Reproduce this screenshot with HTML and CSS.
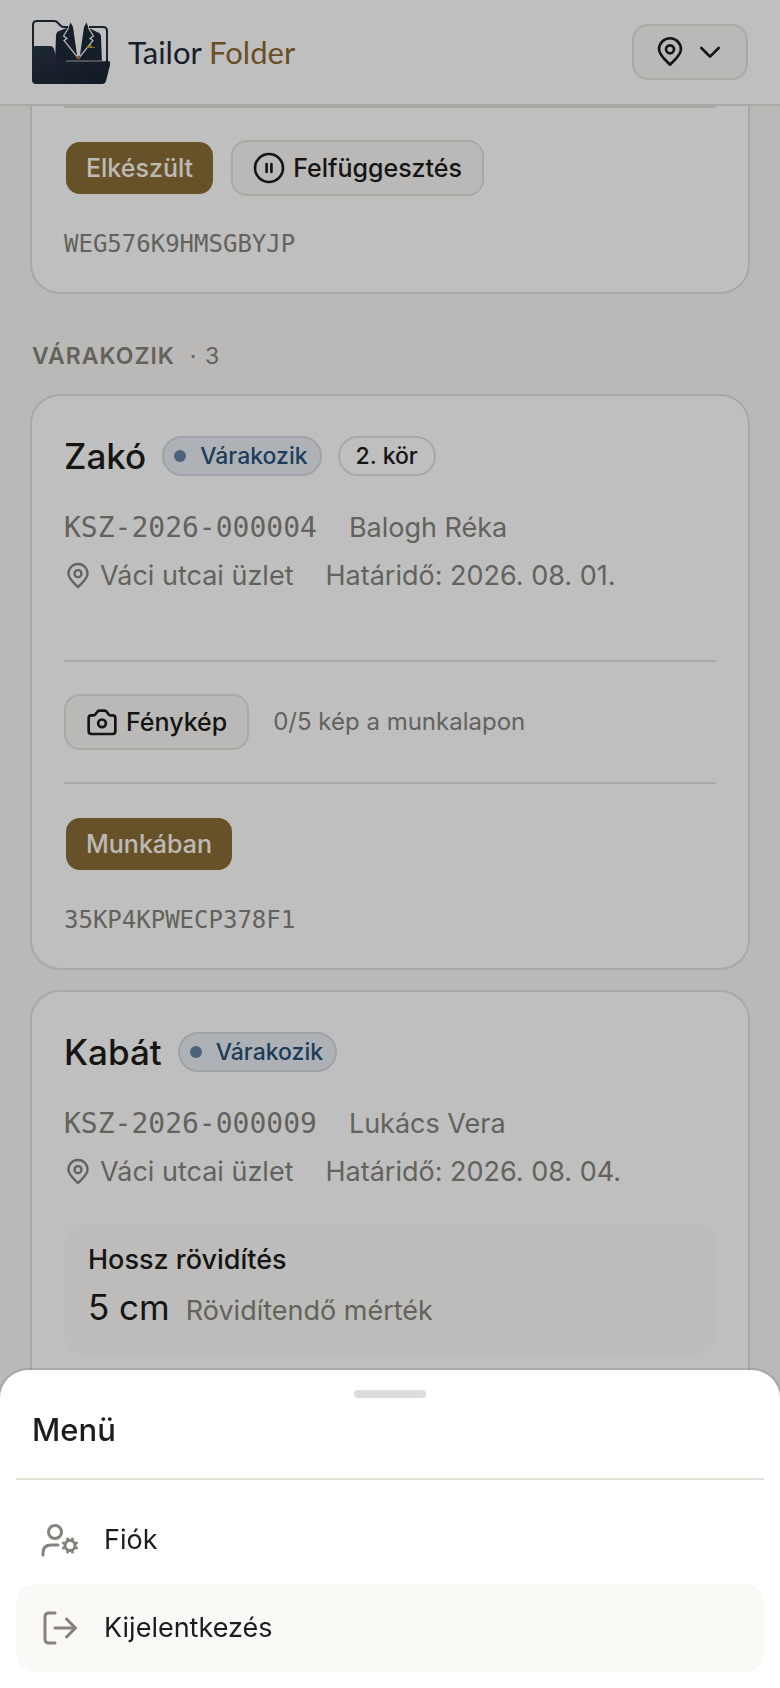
FILE: index.html
```html
<!DOCTYPE html>
<html lang="hu">
<head>
<meta charset="utf-8">
<meta name="viewport" content="width=device-width, initial-scale=1">
<title>Tailor Folder</title>
<link rel="stylesheet" href="styles.css">
</head>
<body>
<svg class="sprite" aria-hidden="true">
  <symbol id="pin" viewBox="0 0 24 24"><path d="M12 21.500C9.300 18.500 3.800 14.600 3.800 9.900a8.200 8.200 0 0 1 16.400 0c0 4.700-5.500 8.600-8.200 11.600z"/><circle cx="12" cy="10" r="3"/></symbol>
</svg>
<div class="app">
  <header class="topbar">
    <a class="brand" href="#">
      <svg class="brand-logo" viewBox="32 20 78 64" aria-hidden="true">
        <defs><linearGradient id="navy" x1="0" y1="0" x2="1" y2="1"><stop offset="0" stop-color="#283446"/><stop offset="1" stop-color="#17222f"/></linearGradient></defs>
        <path d="M33 50V25q0-4 4-4h17q2 0 3 1l4 4q1 1 3 1h4M89 27h14q4 0 4 4v31" fill="none" stroke="#222d3c" stroke-width="2"/>
        <path d="M67 28l-8 3q-3 1-3 5l-1 27h47l-1-26q0-4-4-5l-8-4z" fill="#1e2938"/>
        <path d="M69 24h19l3 9-12.500 26L66 36z" fill="#fff"/>
        <path d="M70.500 22.500L68 29l-4.500 7 3.500 2.500-3 2 13.500 18L73 27z" fill="#1e2938"/>
        <path d="M86.500 22.500L89 29l4.500 7-3.500 2.500 3 2-13.500 18L84 27z" fill="#1e2938"/>
        <path d="M68.500 28l-5 8 3.500 2.500-3 2 14.500 18 14.500-18-3-2 3.500-2.500-5-8" fill="none" stroke="#fff" stroke-width="1.200"/>
        <path d="M87 47l4-3 1 3h3v1h-8z" fill="#b99a35"/>
        <path d="M32 50q0-4 4-4h14q3 0 4 3l2 8q1 4 5 4h47q3 0 2 4l-4 16q-1 3-4 3H36q-4 0-4-4z" fill="url(#navy)"/>
        <path d="M66 61h40" stroke="#aeb2b7" stroke-width="1"/>
        <circle cx="78.500" cy="57.500" r="2" fill="#9a743c"/>
      </svg>
      <span class="brand-name">Tailor <span class="brand-accent">Folder</span></span>
    </a>
    <button class="btn btn-outline location" type="button" aria-label="Üzlet választása">
      <svg class="icon icon-lg" aria-hidden="true"><use href="#pin"/></svg>
      <svg class="icon icon-lg" viewBox="0 0 24 24" aria-hidden="true"><path d="M5.500 9l6.500 6.500L18.500 9"/></svg>
    </button>
  </header>

  <main class="content">
    <article class="card card-continued">
      <div class="actions">
        <button class="btn btn-primary" type="button">Elkészült</button>
        <button class="btn btn-outline" type="button">
          <svg class="icon icon-md" viewBox="0 0 24 24" aria-hidden="true"><circle cx="12" cy="12" r="10.500"/><path d="M10.200 9v6M13.800 9v6"/></svg>
          Felfüggesztés
        </button>
      </div>
      <p class="code">WEG576K9HMSGBYJP</p>
    </article>

    <h2 class="section-title">Várakozik <span class="section-count">· 3</span></h2>

    <div class="cards">
      <article class="card">
        <div class="card-head">
          <h3 class="card-title">Zakó</h3>
          <span class="pill pill-waiting">Várakozik</span>
          <span class="pill">2. kör</span>
        </div>
        <div class="meta">
          <div class="meta-row"><span class="mono">KSZ-2026-000004</span><span>Balogh Réka</span></div>
          <div class="meta-row"><span class="place"><svg class="icon icon-sm" aria-hidden="true"><use href="#pin"/></svg>Váci utcai üzlet</span><span>Határidő: 2026. 08. 01.</span></div>
        </div>
        <div class="actions photo">
          <button class="btn btn-outline" type="button">
            <svg class="icon icon-md" viewBox="0 0 24 24" aria-hidden="true"><path d="M2 9q0-2 2-2h1.500q1 0 1.600-.8L8.500 4.300Q9 3.500 10 3.500h4q1 0 1.500.8l1.400 1.900q.6.800 1.600.8H20q2 0 2 2v10q0 2-2 2H4q-2 0-2-2z"/><circle cx="12" cy="13" r="2.900"/></svg>
            Fénykép
          </button>
          <span class="hint">0/5 kép a munkalapon</span>
        </div>
        <div class="actions">
          <button class="btn btn-primary" type="button">Munkában</button>
        </div>
        <p class="code">35KP4KPWECP378F1</p>
      </article>

      <article class="card card-last">
        <div class="card-head">
          <h3 class="card-title">Kabát</h3>
          <span class="pill pill-waiting">Várakozik</span>
        </div>
        <div class="meta">
          <div class="meta-row"><span class="mono">KSZ-2026-000009</span><span>Lukács Vera</span></div>
          <div class="meta-row"><span class="place"><svg class="icon icon-sm" aria-hidden="true"><use href="#pin"/></svg>Váci utcai üzlet</span><span>Határidő: 2026. 08. 04.</span></div>
        </div>
        <section class="task">
          <h4 class="task-title">Hossz rövidítés</h4>
          <p class="task-value"><span class="measure">5 cm</span><span>Rövidítendő mérték</span></p>
        </section>
      </article>
    </div>
  </main>
</div>

<div class="backdrop"></div>
<section class="sheet" role="dialog" aria-labelledby="menu-title">
  <span class="handle"></span>
  <h2 class="sheet-title" id="menu-title">Menü</h2>
  <nav class="menu">
    <a class="menu-item" href="#">
      <svg class="menu-icon" viewBox="0 0 40 40" aria-hidden="true"><circle cx="15" cy="12" r="6.500"/><path d="M3 35v-2q0-8 8-8h7"/><circle cx="30" cy="25.500" r="5"/><path class="teeth" d="M28 20l-.5-1M32 20l.5-1M28 31l-.5 1M32 31l.5 1M24.500 23.500l-1-.5M24.500 27.500l-1 .5M35.500 23.500l1-.5M35.500 27.500l1 .5"/></svg>
      Fiók
    </a>
    <button class="menu-item is-active" type="button">
      <svg class="menu-icon" viewBox="0 0 40 40" aria-hidden="true"><path d="M15 5H9q-4 0-4 4v22q0 4 4 4h6M15 20h20M26.500 11l9 9-9 9"/></svg>
      Kijelentkezés
    </button>
  </nav>
</section>
</body>
</html>
```

FILE: styles.css
```css
*,
*::before,
*::after {
  box-sizing: border-box;
}

:root {
  --ink: #1c1c1a;
  --muted: #85837c;
  --line: #e3e3d9;
  --ring: #e1e0de;
  --canvas: #f8f7f4;
  --gold: #8a6d37;
}

body {
  margin: 0;
  background: var(--canvas);
  color: var(--ink);
  font-family: Inter, "Liberation Sans", sans-serif;
  font-size: 27px;
  line-height: 40px;
}

h2, h3, h4, p {
  margin: 0;
  font-weight: 500;
}

.sprite {
  position: absolute;
  width: 0;
  height: 0;
}

.app {
  display: flex;
  flex-direction: column;
  height: 100vh;
  overflow: hidden;
}

.topbar {
  display: flex;
  flex: none;
  align-items: center;
  justify-content: space-between;
  padding: 20px 32px;
  background: #fff;
  border-bottom: 2px solid var(--line);
}

.brand {
  display: flex;
  align-items: center;
  gap: 18px;
  color: #222a37;
  text-decoration: none;
}

.brand-logo {
  width: 78px;
  height: 64px;
}

.brand-name {
  font-family: Lato, sans-serif;
  font-size: 31px;
}

.brand-accent {
  color: #8c6a2f;
}

.icon {
  flex: none;
  fill: none;
  stroke: currentColor;
  stroke-width: 2;
  stroke-linecap: round;
  stroke-linejoin: round;
}

.icon-sm { width: 28px; height: 28px; }
.icon-md { width: 32px; height: 32px; }
.icon-lg { width: 32px; height: 32px; }

.btn {
  display: inline-flex;
  align-items: center;
  gap: 8px;
  height: 56px;
  padding: 0 20px;
  border: 2px solid transparent;
  border-radius: 16px;
  background-clip: padding-box;
  color: var(--ink);
  font: 500 25px/36px Inter, "Liberation Sans", sans-serif;
}

.btn-primary {
  background-color: var(--gold);
  color: #fbf8f0;
}

.btn-outline {
  background-color: var(--canvas);
  border-color: var(--line);
}

.location {
  padding: 0 20px;
}

.content {
  display: flex;
  flex: 1;
  flex-direction: column;
  min-height: 0;
  padding: 0 32px;
}

.card {
  flex: none;
  padding: 32px;
  border-radius: 28px;
  background: #fff;
  box-shadow: 0 0 0 2px var(--ring);
}

.card-continued {
  padding-top: 0;
  border-radius: 0 0 28px 28px;
}

.cards {
  display: flex;
  flex: 1;
  flex-direction: column;
  gap: 24px;
}

.card-last {
  flex: 1 0 auto;
}

.actions {
  display: flex;
  align-items: center;
  gap: 16px;
  padding: 32px 0;
  border-top: 2px solid var(--line);
}

.photo {
  gap: 24px;
  margin-top: 64px;
}

.hint {
  color: var(--muted);
  font-size: 24px;
}

.code,
.mono {
  color: var(--muted);
  font-family: "DejaVu Sans Mono", monospace;
  font-weight: 400;
}

.mono {
  font-size: 28px;
}

.code {
  font-size: 24px;
  line-height: 32px;
}

.section-title {
  padding: 44px 0 20px;
  color: var(--muted);
  font-size: 23px;
  font-weight: 600;
  letter-spacing: 1px;
  text-transform: uppercase;
}

.section-count {
  margin-left: 8px;
  font-weight: 400;
}

.card-head {
  display: flex;
  align-items: center;
  gap: 16px;
  margin-bottom: 24px;
}

.card-title {
  font-size: 35px;
  line-height: 56px;
}

.pill {
  display: inline-flex;
  align-items: center;
  gap: 14px;
  height: 40px;
  padding: 0 16px;
  border: 2px solid var(--ring);
  border-radius: 20px;
  font-size: 23px;
  font-weight: 500;
}

.pill-waiting {
  padding: 0 12px 0 10px;
  background: #e8eef3;
  border-color: #d5dae0;
  color: #285279;
}

.pill-waiting::before {
  width: 12px;
  height: 12px;
  border-radius: 50%;
  background: #6485a4;
  content: "";
}

.meta {
  display: grid;
  gap: 8px;
  color: var(--muted);
}

.meta-row {
  display: flex;
  gap: 32px;
}

.place {
  display: flex;
  align-items: center;
  gap: 8px;
}

.task {
  margin-top: 32px;
  padding: 16px 24px;
  border-radius: 20px;
  background: #fcfbf9;
}

.task-title {
  font-size: 27px;
}

.task-value {
  display: flex;
  align-items: baseline;
  gap: 16px;
  color: var(--muted);
  font-weight: 400;
  line-height: 54px;
}

.measure {
  color: var(--ink);
  font-size: 35px;
}

.backdrop {
  position: fixed;
  inset: 0;
  background: rgba(0, 0, 0, 0.25);
}

.sheet {
  position: fixed;
  right: 0;
  bottom: 0;
  left: 0;
  display: flex;
  flex-direction: column;
  padding: 20px 16px 16px;
  border-radius: 28px 28px 0 0;
  background: #fff;
  box-shadow: 0 0 0 2px rgba(0, 0, 0, 0.1);
}

.handle {
  align-self: center;
  width: 72px;
  height: 8px;
  border-radius: 4px;
  background: #dcdcda;
}

.sheet-title {
  padding: 12px 16px 28px;
  border-bottom: 2px solid var(--line);
  font-size: 31px;
}

.menu {
  padding-top: 16px;
}

.menu-item {
  display: flex;
  align-items: center;
  gap: 24px;
  width: 100%;
  height: 88px;
  padding: 0 24px;
  border: 0;
  border-radius: 20px;
  background: none;
  color: var(--ink);
  font: 400 27px/40px Inter, "Liberation Sans", sans-serif;
  text-decoration: none;
}

.is-active {
  background: #faf9f6;
}

.menu-icon {
  width: 40px;
  height: 40px;
  fill: none;
  stroke: var(--muted);
  stroke-width: 3;
  stroke-linecap: round;
  stroke-linejoin: round;
}
```
